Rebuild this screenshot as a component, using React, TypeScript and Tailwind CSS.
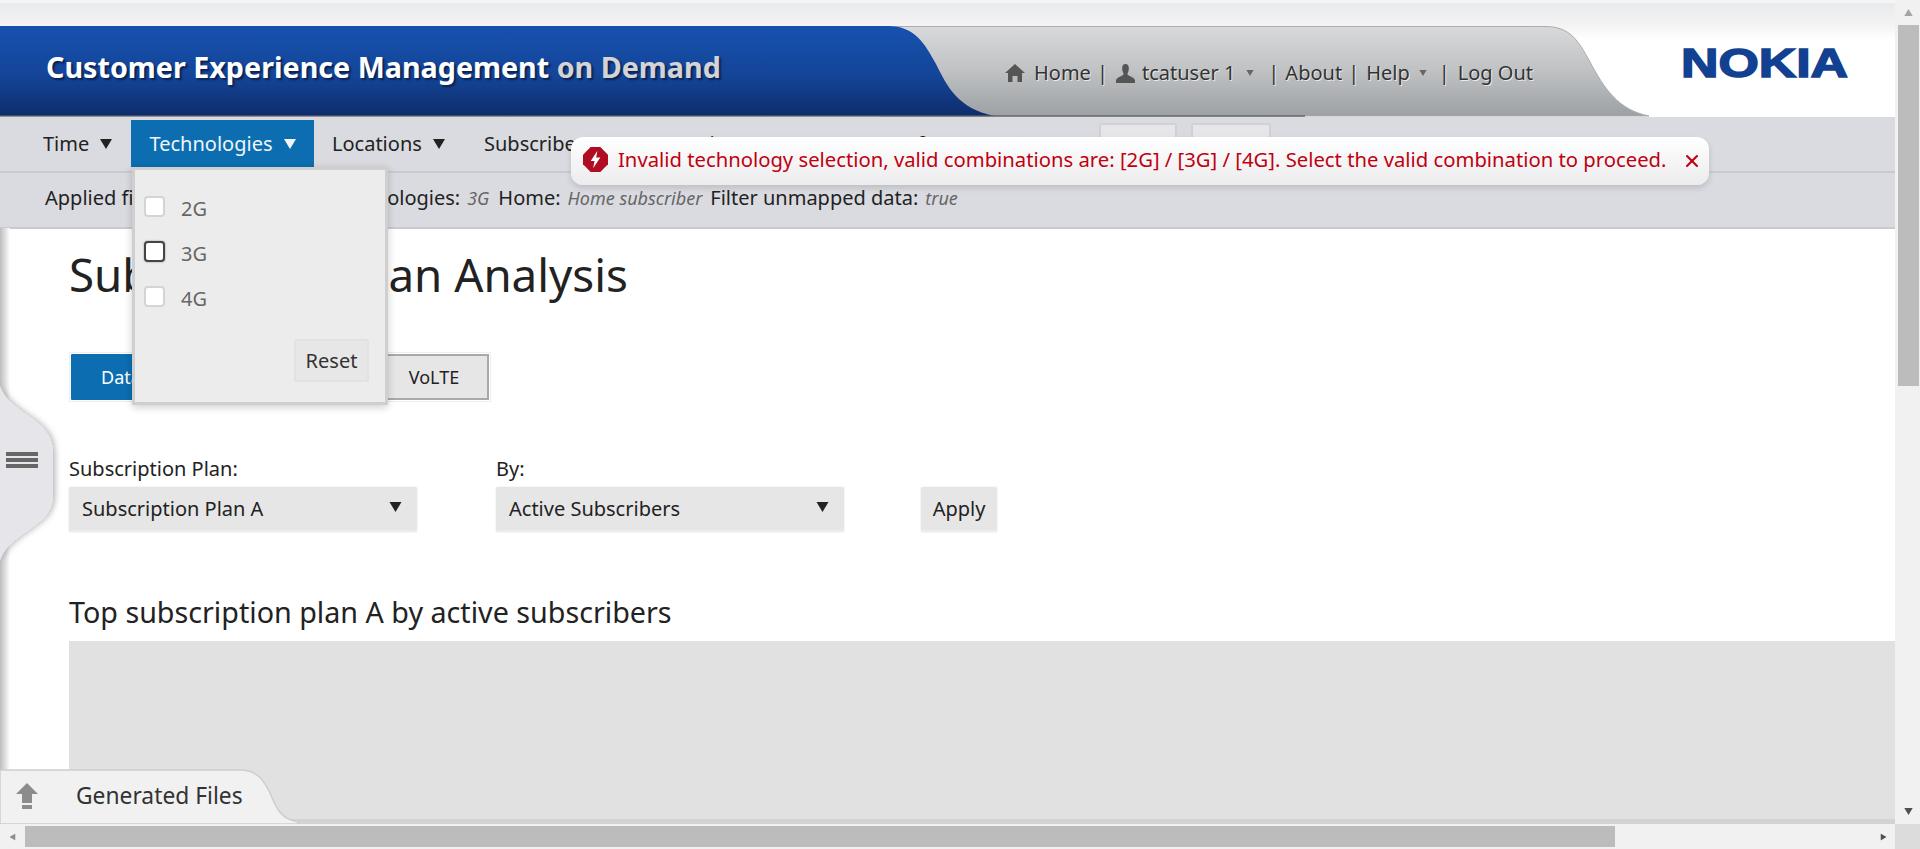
import { X } from "lucide-react";

const navItems = [
  { label: "Time", w: "w-[131px]" },
  { label: "Technologies", w: "w-[183px]", active: true },
  { label: "Locations", w: "w-[152px]" },
  { label: "Subscribers", w: "w-[171px]" },
  { label: "Roaming", w: "w-[231px]" },
  { label: "Preferences", w: "w-[231px]" },
];

function Caret({ className }: { className: string }) {
  return (
    <svg viewBox="0 0 12 10" className={className} fill="currentColor">
      <path d="M0 0h12L6 10z" />
    </svg>
  );
}

function HeaderShapes() {
  return (
    <svg className="absolute inset-0 h-[91px] w-[1895px]" viewBox="0 0 1895 91">
      <defs>
        <linearGradient id="blue" x1="0" y1="0" x2="0" y2="1">
          <stop offset="0" stopColor="#1651af" />
          <stop offset="0.55" stopColor="#144598" />
          <stop offset="1" stopColor="#0e2c6c" />
        </linearGradient>
        <linearGradient id="grey" x1="0" y1="0" x2="0" y2="1">
          <stop offset="0" stopColor="#d8d9db" />
          <stop offset="0.5" stopColor="#bfc1c3" />
          <stop offset="1" stopColor="#9da1a3" />
        </linearGradient>
        <linearGradient id="fade" x1="0" y1="0" x2="0" y2="1">
          <stop offset="0" stopColor="#f4f4f5" />
          <stop offset="1" stopColor="#ffffff" />
        </linearGradient>
      </defs>
      <rect x="1500" y="0" width="395" height="14" fill="url(#fade)" />
      <path
        d="M880 .5H1545C1570 .5 1578 14 1590 36C1604 62 1618 84 1649 90H880Z"
        fill="url(#grey)"
        stroke="#a9abad"
      />
      <path d="M0 0H888C915 0 925 18 936 38C948 62 958 82 994 90H0Z" fill="url(#blue)" />
      <rect x="0" y="89" width="1305" height="2" fill="#5b5f66" opacity="0.7" />
    </svg>
  );
}

function Header() {
  return (
    <div className="relative h-[91px] shrink-0">
      <HeaderShapes />
      <div className="relative flex h-full items-start">
        <div className="ml-[46px] mt-[21px] text-[28.700px] font-bold leading-[40px] text-white [text-shadow:2px_2px_2px_#0b2050]">
          Customer Experience Management <span className="text-[#d4d4d6]">on Demand</span>
        </div>
        <div className="absolute left-[1005px] top-[32px] flex items-center text-[20px] leading-[30px] text-[#333] [text-shadow:1px_1px_0_#e8e8e8]">
          <svg viewBox="0 0 20 18" className="mr-[9px] h-[18px] w-[20px] fill-[#555]">
            <path d="M10 0L20 9h-3v9h-4.500v-6h-5v6H3V9H0z" />
          </svg>
          <span>Home</span>
          <span className="ml-[6px] mr-[8px]">|</span>
          <svg viewBox="0 0 20 20" className="mr-[7px] h-[19px] w-[19px] fill-[#555]">
            <path d="M10 0c2.500 0 3.500 2 3.500 4.500 0 3-1 4.500-1.500 6 0 2 7 3 8 6.500v3H0v-3c1-3.500 8-4.500 8-6.500-.500-1.500-1.500-3-1.500-6C6.500 2 7.500 0 10 0z" />
          </svg>
          <span>tcatuser 1</span>
          <Caret className="ml-[11px] h-[6px] w-[8px] text-[#666]" />
          <span className="ml-[14px] mr-[6px]">|</span>
          <span>About</span>
          <span className="ml-[6px] mr-[7px]">|</span>
          <span>Help</span>
          <Caret className="ml-[9px] h-[6px] w-[8px] text-[#666]" />
          <span className="ml-[12px] mr-[8px]">|</span>
          <span>Log Out</span>
        </div>
        <svg className="absolute left-[1680px] top-[15px] h-[40px] w-[176px]" viewBox="0 0 176 40">
          <text
            x="1"
            y="36"
            textLength="167"
            lengthAdjust="spacingAndGlyphs"
            fontFamily="Liberation Sans, sans-serif"
            fontWeight="700"
            fontSize="40"
            fill="#124191"
            stroke="#124191"
            strokeWidth="1.500"
          >
            NOKIA
          </text>
        </svg>
      </div>
    </div>
  );
}

function Nav() {
  return (
    <div className="relative flex h-[56px] shrink-0 items-start border-b-2 border-[#c9cacd] bg-[#dadbe0] text-[20px] text-[#222]">
      {navItems.map((n) => (
        <div
          key={n.label}
          className={`mt-[3px] flex h-[47px] items-center gap-[11px] ${n.w} ${
            n.active ? "justify-center bg-[#0c6eb1] text-[#f1f5f9]" : "pl-[18px] first:pl-[43px]"
          }`}
        >
          <span>{n.label}</span>
          <Caret className="h-[10px] w-[12px]" />
        </div>
      ))}
      <div className="mt-[6px] flex gap-[14px]">
        <div className="h-[40px] w-[78px] rounded-[2px] border-2 border-[#d0d1d5] bg-[#e6e6e9]" />
        <div className="h-[40px] w-[80px] rounded-[2px] border-2 border-[#d0d1d5] bg-[#e6e6e9]" />
      </div>
    </div>
  );
}

function FilterBar() {
  const val = "text-[18px] italic text-[#666]";
  return (
    <div className="flex h-[56px] shrink-0 items-center border-b-2 border-[#c9cacd] bg-[#dadbe0] pb-[4px] pl-[45px] text-[20px] text-[#222]">
      <span className="mr-[12px]">Applied filters: Time: Last day</span>
      <span className="mr-[7px]">Technologies:</span>
      <span className={`mr-[9px] ${val}`}>3G</span>
      <span className="mr-[7px]">Home:</span>
      <span className={`mr-[8px] ${val}`}>Home subscriber</span>
      <span className="mr-[7px]">Filter unmapped data:</span>
      <span className={val}>true</span>
    </div>
  );
}

function SelectBox({ value }: { value: string }) {
  return (
    <div className="flex h-[45px] w-[348px] items-center justify-between rounded-[2px] border-b-2 border-[#ececec] bg-[#e7e6e7] pl-[13px] pr-[15px] text-[20px] text-[#222] shadow-[0_0_2px_#ddd]">
      <span className="pt-[1px]">{value}</span>
      <Caret className="mb-[4px] h-[10px] w-[13px] text-[#222]" />
    </div>
  );
}

function Content() {
  return (
    <div className="flex min-h-0 flex-1 flex-col overflow-hidden pl-[69px]">
      <h1 className="mt-[15px] text-[45.700px] font-normal leading-[60px] text-[#222]">Subscription Plan Analysis</h1>
      <div className="mt-[48px] flex h-[50px] w-[422px] border border-[#eeeeee] p-[1px] text-[18px]">
        <div className="flex w-[200px] items-center rounded-[1px] bg-[#0c6eb1] pl-[30px] text-white">Data</div>
        <div className="flex-1" />
        <div className="flex w-[103px] items-center justify-center border-2 border-[#a9a9a9] bg-[#e7e6e7] pr-[7px] text-[#222]">
          VoLTE
        </div>
      </div>
      <div className="mt-[54px] flex items-end">
        <div>
          <div className="mb-[5px] text-[20px] leading-[26px] text-[#222]">Subscription Plan:</div>
          <SelectBox value="Subscription Plan A" />
        </div>
        <div className="ml-[79px]">
          <div className="mb-[5px] text-[20px] leading-[26px] text-[#222]">By:</div>
          <SelectBox value="Active Subscribers" />
        </div>
        <div className="ml-[77px] flex h-[45px] w-[76px] items-center justify-center rounded-[2px] border-b-2 border-[#ececec] bg-[#e7e6e7] text-[20px] text-[#222] shadow-[0_0_2px_#ddd]">
          Apply
        </div>
      </div>
      <h2 className="mt-[60px] text-[28.700px] font-normal leading-[40px] text-[#222]">
        Top subscription plan A by active subscribers
      </h2>
      <div className="mt-[9px] flex-1 border-b-[5px] border-[#d2d2d2] bg-[#e1e1e1]" />
    </div>
  );
}

function Dropdown() {
  const rows = [
    { label: "2G", cls: "border-[#d4d4d4]" },
    { label: "3G", cls: "border-[#444] shadow-[0_0_2px_#888]" },
    { label: "4G", cls: "border-[#d4d4d4]" },
  ];
  return (
    <div className="absolute left-[132px] top-[167px] flex h-[238px] w-[256px] flex-col border-[3px] border-[#cfcfcf] bg-[#ececec] pl-[9px] pr-[16px] pt-[26px] shadow-[0_2px_8px_#0003]">
      <div className="flex flex-col gap-[24px]">
        {rows.map((r) => (
          <div key={r.label} className="flex h-[21px] items-center gap-[16px] text-[20px] text-[#666]">
            <span className={`h-[21px] w-[21px] rounded-[4px] border-2 bg-white ${r.cls}`} />
            <span className="mt-[3px] leading-[21px]">{r.label}</span>
          </div>
        ))}
      </div>
      <div className="mt-[32px] flex h-[43px] w-[75px] items-center justify-center self-end rounded-[2px] border-2 border-[#e2e2e2] bg-[#e8e7e8] text-[20px] text-[#333]">
        Reset
      </div>
    </div>
  );
}

function Toast() {
  return (
    <div className="absolute left-[571px] top-[137px] flex h-[48px] w-[1138px] items-center rounded-[12px] bg-gradient-to-b from-white to-[#ececee] pb-[4px] pl-[12px] text-[20.250px] text-[#c00010] shadow-[0_3px_6px_#0002]">
      <svg viewBox="0 0 26 26" className="h-[25px] w-[25px] shrink-0">
        <path d="M8 0h10l8 8v10l-8 8H8l-8-8V8z" fill="#b00d22" />
        <path d="M15 4L8 14.500h4L10.500 22l7.500-11h-4.300z" fill="#fff" />
      </svg>
      <span className="ml-[10px] whitespace-nowrap">
        Invalid technology selection, valid combinations are: [2G] / [3G] / [4G]. Select the valid combination to proceed.
      </span>
      <X className="ml-[16px] mt-[3px] h-[20px] w-[20px]" strokeWidth={2.500} />
    </div>
  );
}

function SideHandle() {
  return (
    <svg className="absolute left-0 top-[228px] h-[545px] w-[70px]" viewBox="0 0 70 545" fill="none">
      <defs>
        <linearGradient id="edge" x1="0" y1="0" x2="1" y2="0">
          <stop offset="0" stopColor="#bdbdbd" />
          <stop offset="1" stopColor="#ffffff" />
        </linearGradient>
        <filter id="soft" x="-30%" y="-10%" width="160%" height="120%">
          <feDropShadow dx="2" dy="0" stdDeviation="3" floodColor="#000" floodOpacity="0.3" />
        </filter>
      </defs>
      <rect x="0" y="0" width="10" height="545" fill="url(#edge)" />
      <path
        d="M0 158C6 174 18 180 34 192C48 202 53 212 53 226V266C53 280 48 288 34 298C18 310 6 316 0 333Z"
        fill="#e6e6ea"
        filter="url(#soft)"
      />
      <path d="M6 224h32v4H6zM6 230h32v4H6zM6 236h32v4H6z" fill="#666" />
    </svg>
  );
}

function GeneratedFiles() {
  return (
    <div className="absolute bottom-[25px] left-0 flex h-[55px] w-[300px] items-center text-[22.800px] text-[#333]">
      <svg className="absolute inset-0 h-[55px] w-[300px]" viewBox="0 0 300 55">
        <path
          d="M0 1H240C258 1 264 12 270 24C276 38 280 50 298 53V55H0Z"
          fill="#f1f1f1"
          stroke="#cdcdcd"
          strokeWidth="1.500"
        />
      </svg>
      <svg viewBox="0 0 22 27" className="relative ml-[16px] h-[27px] w-[22px] fill-[#8c8c8c]">
        <path d="M11 0l11 11h-6v9H6v-9H0zM6 22h10v4H6z" />
      </svg>
      <span className="relative ml-[38px]">Generated Files</span>
    </div>
  );
}

function VScrollbar() {
  return (
    <div className="relative flex w-[25px] shrink-0 flex-col items-center bg-[#f1f1f1] pl-[1px]">
      <div className="flex h-[25px] items-center">
        <Caret className="h-[7px] w-[11px] rotate-180 text-[#a3a3a3]" />
      </div>
      <div className="h-[361px] w-[21px] bg-[#bcbcbc]" />
      <div className="flex-1" />
      <div className="flex h-[26px] items-center">
        <Caret className="h-[7px] w-[11px] text-[#505050]" />
      </div>
    </div>
  );
}

function HScrollbar() {
  return (
    <div className="flex h-[25px] shrink-0 items-center bg-[#f1f1f1]">
      <div className="flex w-[25px] justify-center">
        <Caret className="h-[6px] w-[11px] rotate-90 text-[#8c8c8c]" />
      </div>
      <div className="h-[21px] w-[1590px] bg-[#bcbcbc]" />
      <div className="flex flex-1 justify-end pr-[6px]">
        <Caret className="h-[6px] w-[11px] -rotate-90 text-[#505050]" />
      </div>
      <div className="h-[25px] w-[25px] bg-[#dcdcdc]" />
    </div>
  );
}

export default function App() {
  return (
    <div className="relative flex h-[849px] w-[1920px] flex-col overflow-hidden bg-white font-['Noto_Sans',sans-serif]">
      <div className="flex min-h-0 flex-1">
        <div className="flex w-[1895px] flex-col">
          <div className="h-[26px] shrink-0 border-t-[3px] border-[#f5f5f5] bg-gradient-to-b from-[#e9eaec] to-[#f4f4f5]" />
          <Header />
          <Nav />
          <FilterBar />
          <Content />
        </div>
        <VScrollbar />
      </div>
      <HScrollbar />
      <SideHandle />
      <GeneratedFiles />
      <Dropdown />
      <Toast />
    </div>
  );
}
